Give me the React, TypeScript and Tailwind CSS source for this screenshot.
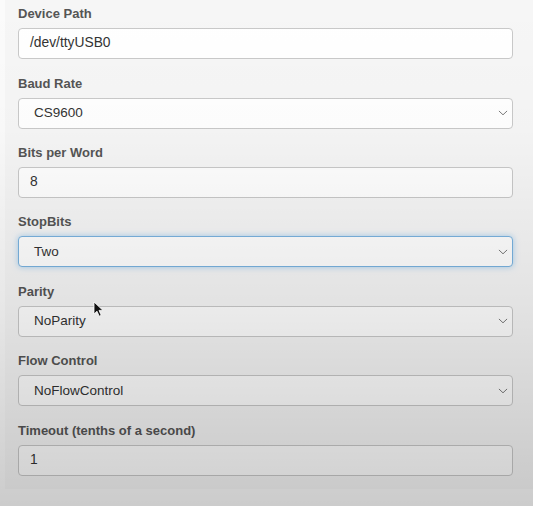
import React from "react";

type Field = { label: string; value: string; select?: boolean; focus?: boolean };

const fields: Field[] = [
  { label: "Device Path", value: "/dev/ttyUSB0" },
  { label: "Baud Rate", value: "CS9600", select: true },
  { label: "Bits per Word", value: "8" },
  { label: "StopBits", value: "Two", select: true, focus: true },
  { label: "Parity", value: "NoParity", select: true },
  { label: "Flow Control", value: "NoFlowControl", select: true },
  { label: "Timeout (tenths of a second)", value: "1" },
];

function Chevron() {
  return (
    <svg width="10" height="6" viewBox="0 0 10 6" fill="none">
      <path d="M1.2 1.2 L5 4.8 L8.8 1.2" stroke="#7a7a7a" strokeWidth="1" strokeLinecap="round" strokeLinejoin="round" />
    </svg>
  );
}

export default function App() {
  return (
    <div className="relative w-[533px] h-[506px] overflow-hidden bg-[#fbfbfb] font-['Liberation_Sans',Arial,sans-serif]">
      <div className="ml-[5px] h-[489px] bg-[#f6f6f6] pl-[13px] pr-[20px] pt-[4.3px]">
        {fields.map((f) => (
          <div key={f.label} className="mb-[14.4px]">
            <div className="h-[20px] leading-[20px] text-[13px] font-bold text-[#555]">{f.label}</div>
            <div
              className={
                f.focus
                  ? "mt-[4px] flex h-[31px] items-center rounded-[4px] border border-[#7ab3e0] bg-white pl-[15px] pr-[4px] text-[13.5px] text-[#333] shadow-[0_0_6px_rgba(102,175,233,0.55)]"
                  : f.select
                  ? "mt-[4px] flex h-[31px] items-center rounded-[4px] border border-[#c9c9c9] bg-white pl-[15px] pr-[4px] text-[13.5px] text-[#333]"
                  : "mt-[4px] flex h-[31px] items-center rounded-[4px] border border-[#c9c9c9] bg-white pl-[11px] pr-[4px] text-[13.8px] text-[#333]"
              }
            >
              <span className="flex-1">{f.value}</span>
              {f.select && <Chevron />}
            </div>
          </div>
        ))}
      </div>
      <div className="pointer-events-none absolute inset-0 bg-[linear-gradient(to_bottom,rgba(0,0,0,0)_0%,rgba(0,0,0,0.01)_25%,rgba(0,0,0,0.08)_60%,rgba(0,0,0,0.19)_100%)]" />
      <svg className="absolute left-[93px] top-[301px]" width="12" height="17" viewBox="0 0 12 17">
        <path d="M1 1 L1 13 L4 10.2 L6.2 15.2 L8.2 14.3 L6 9.4 L10 9.4 Z" fill="#111" stroke="#fff" strokeWidth="0.8" strokeLinejoin="round" />
      </svg>
    </div>
  );
}
